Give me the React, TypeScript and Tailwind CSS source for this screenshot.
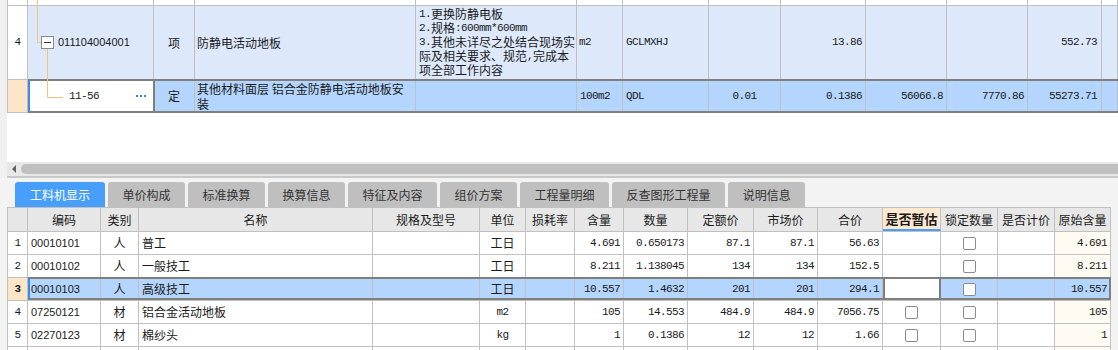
const cjk = "font-['Noto_Sans_CJK_SC',sans-serif] text-[12px]"
const mono = "font-['Liberation_Mono',monospace] text-[11px] tracking-[-0.6px]"
const sans = "font-['Liberation_Sans',sans-serif] text-[11px]"

const line = 'border-[#c0c0c0]'

const Cell = ({
    w,
    className = '',
    children
}: {
    w: string
    className?: string
    children?: React.ReactNode
}) => (
    <div className={`${w} h-full shrink-0 border-r ${line} flex items-center overflow-hidden ${className}`}>
        {children}
    </div>
)

const M = ({ children }: { children: React.ReactNode }) => <span className={`${mono} leading-[14px]`}>{children}</span>

// one fixed-height text line, so mixed fonts don't push the lines apart
const L = ({ h, children }: { h: string; children: React.ReactNode }) => (
    <div className={`${h} flex items-center whitespace-nowrap`}>{children}</div>
)

const topW = [
    'w-[21px]',
    'w-[126px]',
    'w-[41px]',
    'w-[221px]',
    'w-[161px]',
    'w-[46px]',
    'w-[86px]',
    'w-[72px]',
    'w-[85px]',
    'w-[81px]',
    'w-[81px]',
    'w-[74px]',
    'w-[16px]'
]

const TopTable = () => (
    <div className="relative w-[1111px] h-[162px] bg-white text-[#1a1a1a]">
        {/* previous row, mostly scrolled out */}
        <div className={`flex h-[6px] border-b ${line}`}>
            {topW.map((w, i) => (
                <Cell key={i} w={w} className={i === 0 ? `border-l ${line}` : ''} />
            ))}
        </div>

        <div className={`flex h-[74px] border-b ${line} bg-[#dde9fb]`}>
            <Cell w="w-[21px]" className={`bg-white border-l ${line} justify-center ${mono}`}>
                4
            </Cell>
            <Cell w="w-[126px]" className={`pl-[30px] ${sans}`}>
                011104004001
            </Cell>
            <Cell w="w-[41px]" className={`justify-center ${cjk}`}>
                项
            </Cell>
            <Cell w="w-[221px]" className={`pl-[2px] ${cjk}`}>
                防静电活动地板
            </Cell>
            <Cell w="w-[161px]" className={`pl-[3px] items-start pt-[1px] leading-[14px] ${cjk}`}>
                <div>
                    <L h="h-[14px]">
                        <M>1.</M>更换防静电板
                    </L>
                    <L h="h-[14px]">
                        <M>2.</M>规格<M>:600mm*600mm</M>
                    </L>
                    <L h="h-[14px]">
                        <M>3.</M>其他未详尽之处结合现场实
                    </L>
                    <L h="h-[14px]">
                        际及相关要求、规范<M>,</M>完成本
                    </L>
                    <L h="h-[14px]">项全部工作内容</L>
                </div>
            </Cell>
            <Cell w="w-[46px]" className={`pl-[2px] ${mono}`}>
                m2
            </Cell>
            <Cell w="w-[86px]" className={`pl-[3px] ${mono}`}>
                GCLMXHJ
            </Cell>
            <Cell w="w-[72px]" />
            <Cell w="w-[85px]" className={`justify-end pr-[3px] ${mono}`}>
                13.86
            </Cell>
            <Cell w="w-[81px]" />
            <Cell w="w-[81px]" />
            <Cell w="w-[74px]" className={`justify-end pr-[4px] ${mono}`}>
                552.73
            </Cell>
            <Cell w="w-[16px]" />
        </div>

        <div className={`flex h-[33px] border-b ${line} bg-[#b4d5fe]`}>
            <Cell w="w-[21px]" className={`bg-[#fde5c8] border-l ${line}`} />
            <Cell w="w-[126px]" className={`bg-white pl-[41px] pr-[7px] justify-between ${mono}`}>
                <span>11-56</span>
                <span className="flex gap-[2px]">
                    <i className="w-[2px] h-[2px] bg-[#3b82d6]" />
                    <i className="w-[2px] h-[2px] bg-[#3b82d6]" />
                    <i className="w-[2px] h-[2px] bg-[#3b82d6]" />
                </span>
            </Cell>
            <Cell w="w-[41px]" className={`justify-center ${cjk}`}>
                定
            </Cell>
            <Cell w="w-[221px]" className={`pl-[2px] items-start pt-[1px] leading-[15px] ${cjk}`}>
                <div>
                    <L h="h-[15px]">其他材料面层 铝合金防静电活动地板安</L>
                    <L h="h-[15px]">装</L>
                </div>
            </Cell>
            <Cell w="w-[161px]" />
            <Cell w="w-[46px]" className={`pl-[3px] ${mono}`}>
                100m2
            </Cell>
            <Cell w="w-[86px]" className={`pl-[3px] ${mono}`}>
                QDL
            </Cell>
            <Cell w="w-[72px]" className={`justify-center ${mono}`}>
                0.01
            </Cell>
            <Cell w="w-[85px]" className={`justify-end pr-[3px] ${mono}`}>
                0.1386
            </Cell>
            <Cell w="w-[81px]" className={`justify-end pr-[3px] ${mono}`}>
                56066.8
            </Cell>
            <Cell w="w-[81px]" className={`justify-end pr-[3px] ${mono}`}>
                7770.86
            </Cell>
            <Cell w="w-[74px]" className={`justify-end pr-[4px] ${mono}`}>
                55273.71
            </Cell>
            <Cell w="w-[16px]" />
        </div>

        {/* selection outlines */}
        <div className="absolute left-[21px] right-0 top-[79px] h-[34px] border-y-2 border-[#7f7f7f] pointer-events-none" />
        <div className="absolute left-[21px] w-[127px] top-[79px] h-[34px] border-2 border-[#7f7f7f] border-l-[#3d8be8] pointer-events-none" />

        {/* tree lines */}
        <svg className="absolute left-0 top-0 pointer-events-none" width="70" height="110">
            <path d="M30.5 0V42.5H34.5M40.5 48.5V97.5H56" stroke="#f5c27d" fill="none" />
            <rect x="34.5" y="36.5" width="12" height="12" fill="#fff" stroke="#8a8a8a" />
            <path d="M37 42.5H44" stroke="#333" />
        </svg>
    </div>
)

const ScrollBar = () => (
    <div className="flex h-[16px]">
        <div className="w-[7px] bg-[#f0f0f0]" />
        <div className="flex-1 flex flex-col">
            <div className="h-[14px] bg-[#e8e8e8] flex items-center">
                <svg className="ml-[5px]" width="4" height="8" viewBox="0 0 4 8">
                    <path d="M4 0V8L0 4Z" fill="#606060" />
                </svg>
                <div className="ml-[5px] flex-1 h-[10px] rounded-l-[5px] bg-[#c0c0c0]" />
            </div>
            <div className="h-[2px] bg-[#c8c8c8]" />
        </div>
    </div>
)

const tabs = ['工料机显示', '单价构成', '标准换算', '换算信息', '特征及内容', '组价方案', '工程量明细', '反查图形工程量', '说明信息']

const Tabs = () => (
    <div className={`flex gap-[3px] pl-[15px] pt-[4px] ${cjk}`}>
        {tabs.map((t, i) => (
            <div
                key={t}
                className={`h-[25px] flex items-center rounded-t-[3px] ${
                    i === 0 ? 'bg-[#479ffb] text-white px-[15px]' : 'bg-[#bfbfbf] text-[#333] px-[14.5px]'
                }`}
            >
                {t}
            </div>
        ))}
    </div>
)

const cols = [
    { label: '编码', w: 'w-[73px]' },
    { label: '类别', w: 'w-[38px]' },
    { label: '名称', w: 'w-[234px]' },
    { label: '规格及型号', w: 'w-[107px]' },
    { label: '单位', w: 'w-[46px]' },
    { label: '损耗率', w: 'w-[49px]' },
    { label: '含量', w: 'w-[49px]' },
    { label: '数量', w: 'w-[64px]' },
    { label: '定额价', w: 'w-[66px]' },
    { label: '市场价', w: 'w-[64px]' },
    { label: '合价', w: 'w-[65px]' },
    { label: '是否暂估', w: 'w-[58px]' },
    { label: '锁定数量', w: 'w-[57px]' },
    { label: '是否计价', w: 'w-[57px]' },
    { label: '原始含量', w: 'w-[56px]' }
]

type Item = {
    code: string
    type: string
    name: string
    unit: string
    qty: string
    num: string
    price: string
    market: string
    total: string
    est: boolean
    orig: string
}

const items: Item[] = [
    { code: '00010101', type: '人', name: '普工', unit: '工日', qty: '4.691', num: '0.650173', price: '87.1', market: '87.1', total: '56.63', est: false, orig: '4.691' },
    { code: '00010102', type: '人', name: '一般技工', unit: '工日', qty: '8.211', num: '1.138045', price: '134', market: '134', total: '152.5', est: false, orig: '8.211' },
    { code: '00010103', type: '人', name: '高级技工', unit: '工日', qty: '10.557', num: '1.4632', price: '201', market: '201', total: '294.1', est: false, orig: '10.557' },
    { code: '07250121', type: '材', name: '铝合金活动地板', unit: 'm2', qty: '105', num: '14.553', price: '484.9', market: '484.9', total: '7056.75', est: true, orig: '105' },
    { code: '02270123', type: '材', name: '棉纱头', unit: 'kg', qty: '1', num: '0.1386', price: '12', market: '12', total: '1.66', est: true, orig: '1' }
]

const Check = () => <span className="w-[13px] h-[13px] border border-[#8c8c8c] rounded-[2px] bg-white" />

const Row = ({ item, idx }: { item: Item; idx: number }) => {
    let selected = idx === 3
    let num = `justify-end pr-[3px] ${mono}`
    return (
        <div className={`relative flex h-[23px] border-b ${line} ${selected ? 'bg-[#b4d5fe]' : 'bg-white'}`}>
            <Cell
                w="w-[21px]"
                className={`border-l ${line} justify-center ${mono} ${selected ? 'bg-[#fde5c8] font-bold' : 'bg-white'}`}
            >
                {idx}
            </Cell>
            <Cell w={cols[0].w} className={`pl-[3px] ${sans}`}>
                {item.code}
            </Cell>
            <Cell w={cols[1].w} className={`justify-center ${cjk}`}>
                {item.type}
            </Cell>
            <Cell w={cols[2].w} className={`pl-[3px] ${cjk}`}>
                {item.name}
            </Cell>
            <Cell w={cols[3].w} />
            <Cell w={cols[4].w} className={`justify-center ${item.unit === '工日' ? cjk : mono}`}>
                {item.unit}
            </Cell>
            <Cell w={cols[5].w} />
            <Cell w={cols[6].w} className={num}>
                {item.qty}
            </Cell>
            <Cell w={cols[7].w} className={num}>
                {item.num}
            </Cell>
            <Cell w={cols[8].w} className={num}>
                {item.price}
            </Cell>
            <Cell w={cols[9].w} className={num}>
                {item.market}
            </Cell>
            <Cell w={cols[10].w} className={num}>
                {item.total}
            </Cell>
            <Cell w={cols[11].w} className={`justify-center ${selected ? 'bg-white' : ''}`}>
                {item.est && <Check />}
            </Cell>
            <Cell w={cols[12].w} className="justify-center">
                <Check />
            </Cell>
            <Cell w={cols[13].w} />
            <Cell w={cols[14].w} className={`${num} ${selected ? '' : 'bg-[#fffaf2]'}`}>
                {item.orig}
            </Cell>
            {selected && (
                <>
                    <div className="absolute left-[21px] right-0 -top-px bottom-0 border-y-2 border-r-2 border-l-2 border-[#7f7f7f] border-l-[#3d8be8] pointer-events-none" />
                    <div className="absolute left-[876px] w-[58px] -top-px bottom-0 border-x-2 border-[#7f7f7f] pointer-events-none" />
                </>
            )}
        </div>
    )
}

const BottomTable = () => (
    <div className="pl-[7px] text-[#1a1a1a]">
        <div className={`w-[1104px] border-t ${line}`}>
            <div className={`flex h-[24px] border-b ${line} bg-[#e7e7e7] ${cjk}`}>
                <Cell w="w-[21px]" className={`border-l ${line}`} />
                {cols.map((c) =>
                    c.label === '是否暂估' ? (
                        <Cell
                            key={c.label}
                            w={c.w}
                            className="justify-center bg-[#fde9cf] font-bold text-[13px] border-b-2 border-b-[#4a9ff5]"
                        >
                            {c.label}
                        </Cell>
                    ) : (
                        <Cell key={c.label} w={c.w} className="justify-center">
                            {c.label}
                        </Cell>
                    )
                )}
            </div>
            {items.map((item, i) => (
                <Row key={item.code} item={item} idx={i + 1} />
            ))}
            <div className={`flex h-[23px] border-b ${line} bg-white`}>
                <Cell w="w-[21px]" className={`border-l ${line}`} />
                {cols.map((c) => (
                    <Cell key={c.label} w={c.w} className={c.label === '原始含量' ? 'bg-[#fffaf2]' : ''} />
                ))}
            </div>
        </div>
    </div>
)

const App = () => (
    <div className="w-[1118px] h-[350px] overflow-hidden bg-[#f3f3f3] font-['Noto_Sans_CJK_SC',sans-serif]">
        <div className="flex">
            <div className="w-[7px] h-[162px] bg-[#f0f0f0]" />
            <TopTable />
        </div>
        <ScrollBar />
        <Tabs />
        <BottomTable />
    </div>
)

export default App
